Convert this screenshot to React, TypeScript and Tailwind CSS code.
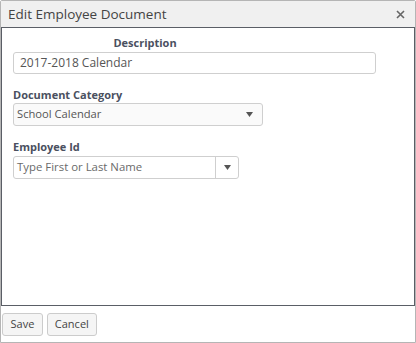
export default function App() {
  return (
    <div className="w-[416px] h-[343px] bg-white font-['Open_Sans',sans-serif] text-[#333]">
      <div className="flex h-full flex-col border border-[#b5b5b5] rounded-t-[2px]">
        <div className="flex h-[26px] items-center justify-between bg-[#f0f0f0] pl-[7px] pr-[10px]">
          <span className="text-[13.5px] text-[#444]">Edit Employee Document</span>
          <svg width="9" height="9" viewBox="0 0 9 9" className="text-[#666]">
            <path d="M1 1L8 8M8 1L1 8" stroke="currentColor" strokeWidth="1.6" />
          </svg>
        </div>
        <div className="flex-1 border border-[#5a5e66] bg-white px-[11px] pt-[7px]">
          <div className="w-[363px]">
            <div className="w-[264px] text-center text-[11px] font-bold text-[#4a5060]">Description</div>
            <div className="flex h-[22px] items-center rounded-[3px] border border-[#cfcfcf] px-[6px] text-[12px] text-[#555]">
              2017-2018 Calendar
            </div>
          </div>
          <div className="mt-[13px] text-[11px] font-bold text-[#4a5060]">Document Category</div>
          <div className="flex h-[23px] w-[250px] items-center justify-between rounded-[3px] border border-[#cfcfcf] bg-[#fafafa] pl-[3px] pr-[9px] text-[11.2px] text-[#555]">
            <span>School Calendar</span>
            <svg width="7" height="5" viewBox="0 0 7 5"><path d="M0 0H7L3.5 5Z" fill="#555" /></svg>
          </div>
          <div className="mt-[13px] text-[11px] font-bold text-[#4a5060]">Employee Id</div>
          <div className="flex h-[23px] w-[226px] items-center rounded-[3px] border border-[#cfcfcf] text-[11.4px]">
            <span className="flex-1 pl-[3px] text-[#6a6a6a]">Type First or Last Name</span>
            <div className="flex h-full w-[23px] items-center justify-center border-l border-[#cfcfcf]">
              <svg width="7" height="5" viewBox="0 0 7 5"><path d="M0 0H7L3.5 5Z" fill="#555" /></svg>
            </div>
          </div>
        </div>
        <div className="flex h-[36px] items-center gap-[4px] px-[1px] pt-[1px]">
          <button className="h-[23px] rounded-[3px] border border-[#ccc] bg-[#f5f5f5] px-[7.5px] text-[11px] text-[#444]">Save</button>
          <button className="h-[23px] rounded-[3px] border border-[#ccc] bg-[#f5f5f5] px-[7px] text-[11px] text-[#444]">Cancel</button>
        </div>
      </div>
    </div>
  );
}
